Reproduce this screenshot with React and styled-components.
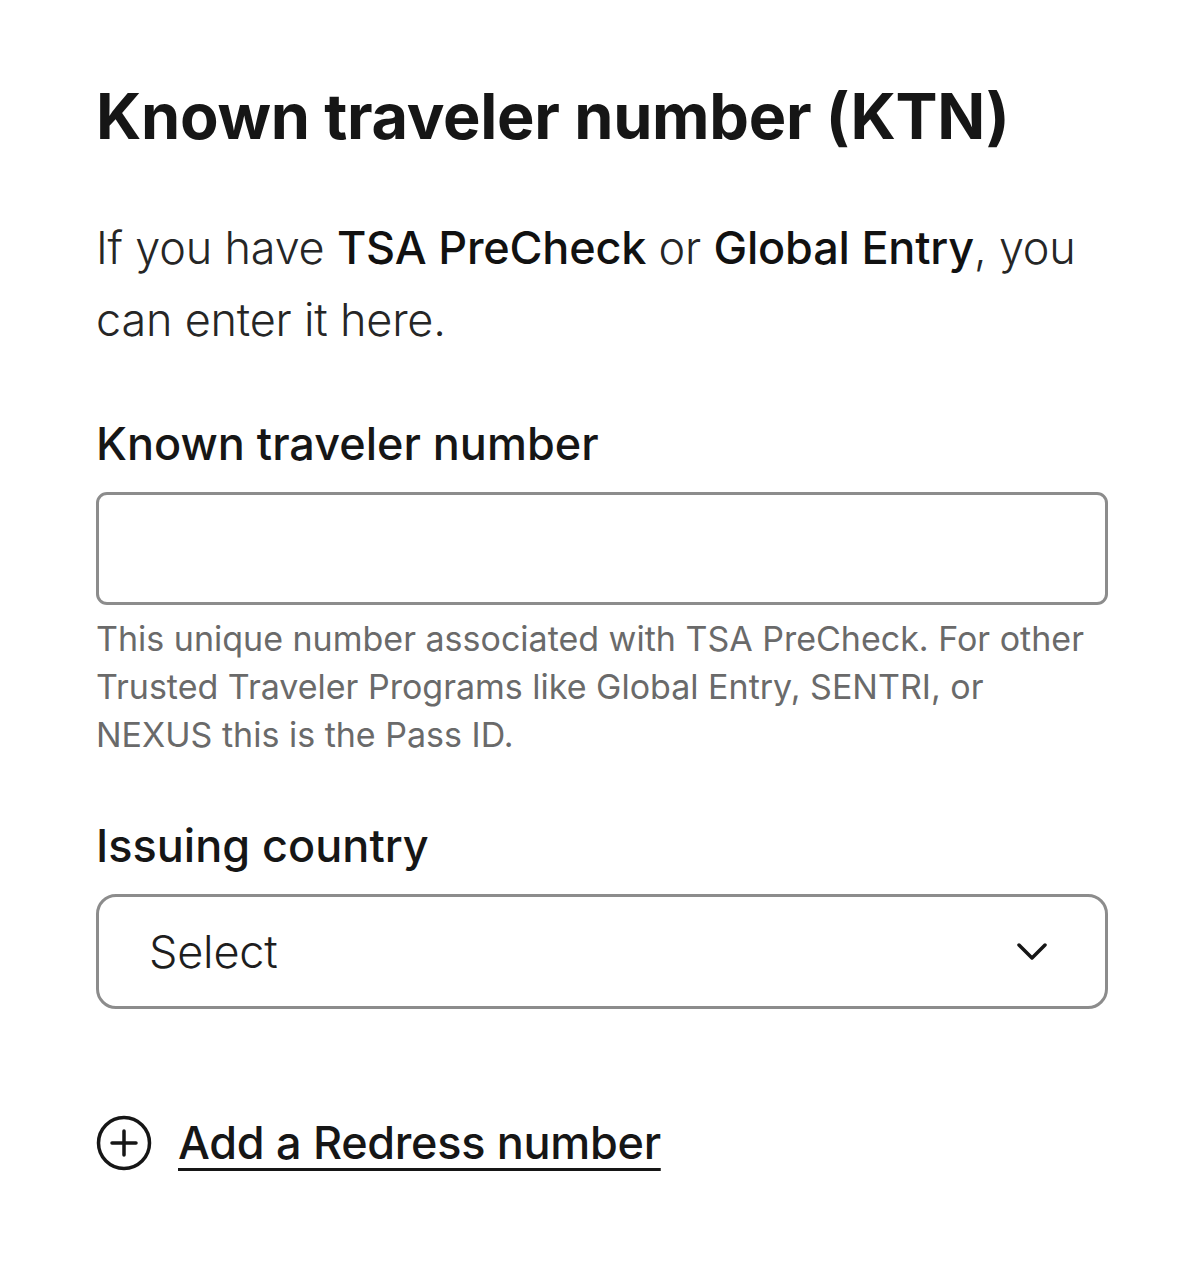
import React from 'react';
import styled, { createGlobalStyle } from 'styled-components';

const GlobalStyle = createGlobalStyle`
  body {
    margin: 0;
    background: #fff;
    font-family: Inter, 'Liberation Sans', sans-serif;
    color: #1a1a1a;
  }
`;

const Page = styled.div`
  width: 1012px;
  padding: 74px 0 80px 96px;
  display: flex;
  flex-direction: column;
`;

const Title = styled.h1`
  margin: 0;
  font-size: 63px;
  line-height: 84px;
  font-weight: 700;
  letter-spacing: -0.3px;
  color: #161616;
`;

const Intro = styled.p`
  margin: 54px 0 0;
  font-size: 45px;
  line-height: 72px;
  font-weight: 350;
  color: #262626;
  letter-spacing: -0.2px;
`;

const Em = styled.span`
  font-weight: 500;
  color: #111;
`;

const Field = styled.div`
  display: flex;
  flex-direction: column;
  margin-top: ${({ gap }) => gap}px;
`;

const Label = styled.label`
  font-size: 45px;
  line-height: 56px;
  font-weight: 500;
  color: #161616;
  letter-spacing: 0;
  margin-bottom: 20px;
`;

const Input = styled.input`
  box-sizing: border-box;
  width: 100%;
  height: 113px;
  border: 3px solid #8c8c8c;
  border-radius: 11px;
  background: #fff;
  padding: 0 48px;
  font-family: inherit;
  font-size: 45px;
  outline: none;
`;

const Hint = styled.p`
  margin: 10px 0 0;
  font-size: 34px;
  line-height: 48px;
  color: #6a6a6a;
  letter-spacing: 0;
`;

const SelectBox = styled.div`
  box-sizing: border-box;
  width: 100%;
  height: 115px;
  border: 3px solid #8c8c8c;
  border-radius: 20px;
  display: flex;
  align-items: center;
  justify-content: space-between;
  padding: 0 58px 0 50px;
  font-size: 45px;
  font-weight: 350;
  color: #1e1e1e;
  letter-spacing: -0.2px;
`;

const AddRow = styled.a`
  display: flex;
  align-items: center;
  gap: 26px;
  margin-top: 106px;
  color: #161616;
  text-decoration: none;
  cursor: pointer;
`;

const AddText = styled.span`
  font-size: 45px;
  line-height: 56px;
  font-weight: 500;
  letter-spacing: -0.3px;
  text-decoration: underline;
  text-decoration-thickness: 3px;
  text-underline-offset: 9px;
`;

const Chevron = () => (
  <svg width="30" height="18" viewBox="0 0 30 18" fill="none">
    <path d="M2 2L15 15L28 2" stroke="#161616" strokeWidth="3.5" strokeLinecap="round" strokeLinejoin="round" />
  </svg>
);

const PlusCircle = () => (
  <svg width="56" height="56" viewBox="0 0 56 56" fill="none">
    <circle cx="28" cy="28" r="25.5" stroke="#161616" strokeWidth="3.5" />
    <path d="M28 16V40M16 28H40" stroke="#161616" strokeWidth="3.5" strokeLinecap="round" />
  </svg>
);

export default function App() {
  return (
    <>
      <GlobalStyle />
      <Page>
        <Title>Known traveler number (KTN)</Title>
        <Intro>
          If you have <Em>TSA PreCheck</Em> or <Em>Global Entry</Em>, you can enter it here.
        </Intro>
        <Field gap={60}>
          <Label>Known traveler number</Label>
          <Input type="text" />
          <Hint>
            This unique number associated with TSA PreCheck. For other Trusted Traveler Programs like Global Entry, SENTRI, or NEXUS this is the Pass ID.
          </Hint>
        </Field>
        <Field gap={59}>
          <Label>Issuing country</Label>
          <SelectBox>
            <span>Select</span>
            <Chevron />
          </SelectBox>
        </Field>
        <AddRow>
          <PlusCircle />
          <AddText>Add a Redress number</AddText>
        </AddRow>
      </Page>
    </>
  );
}
